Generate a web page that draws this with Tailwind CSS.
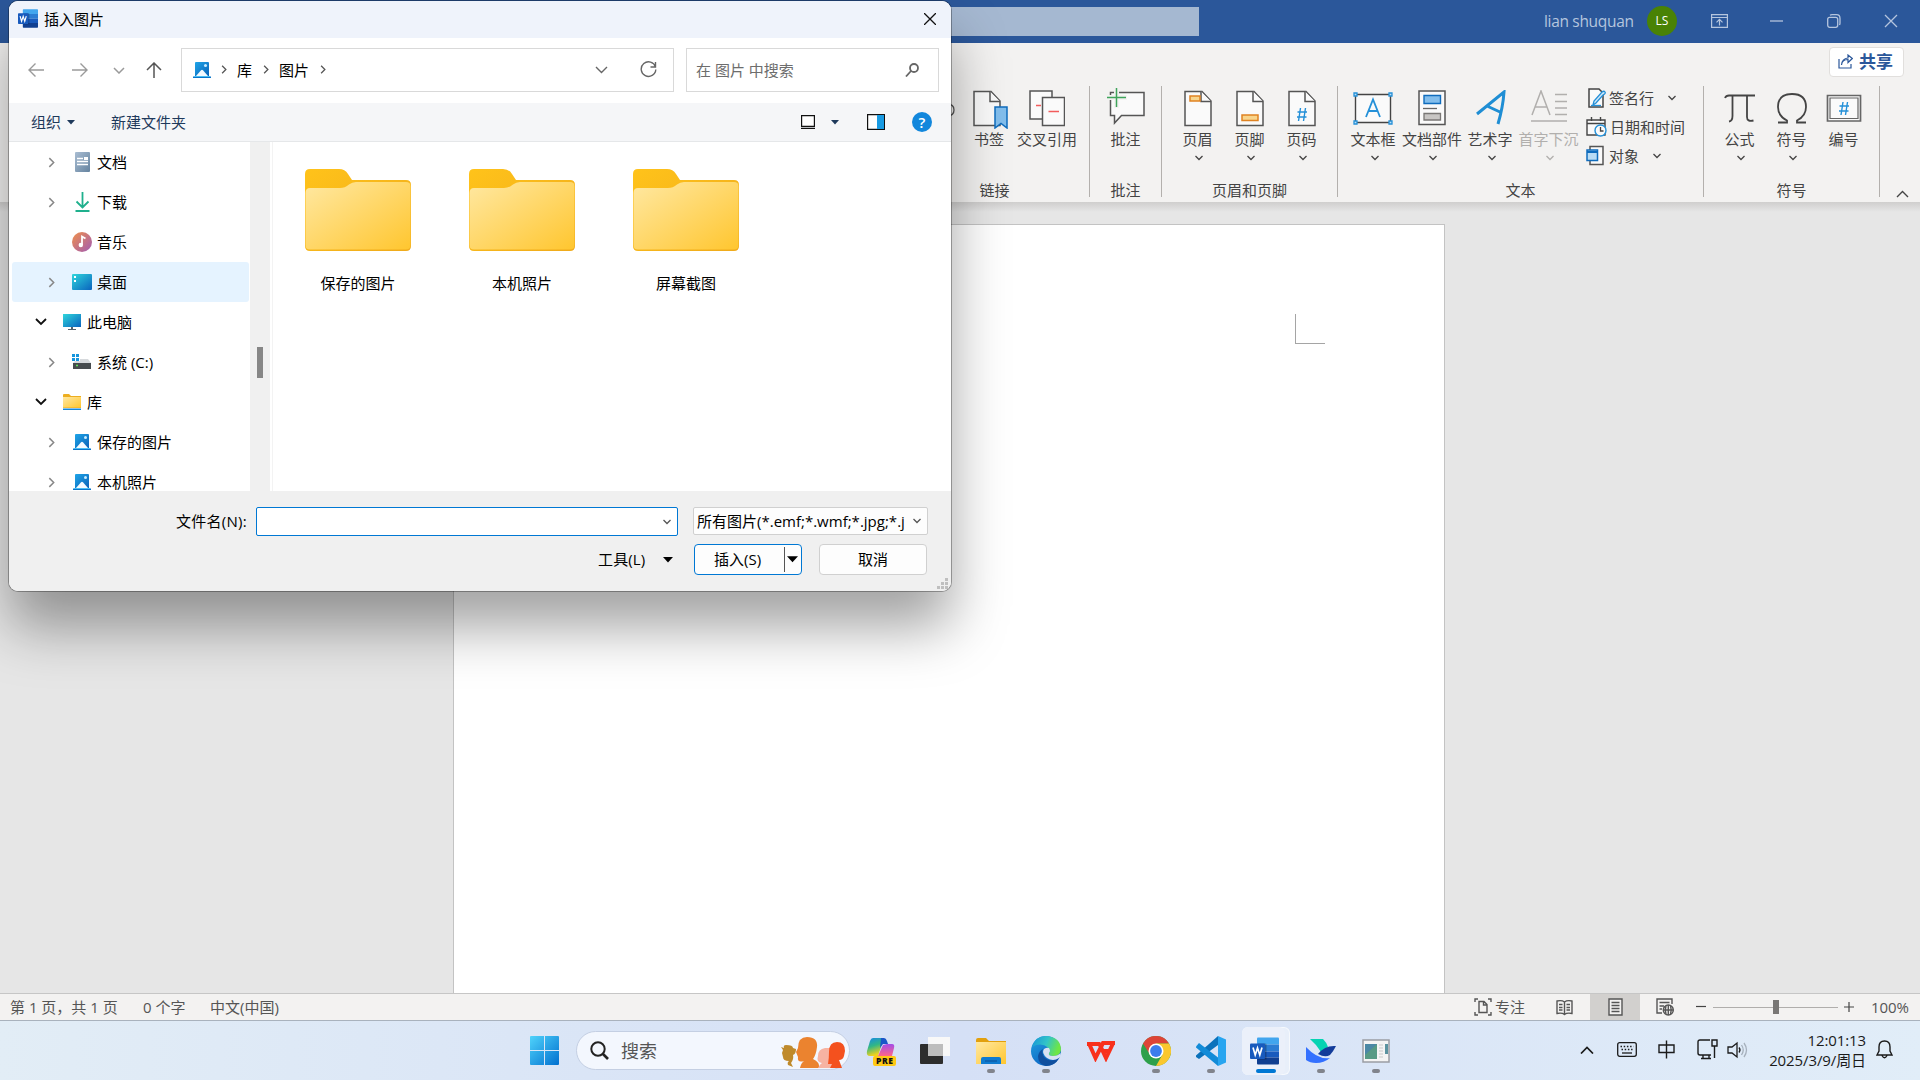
<!DOCTYPE html>
<html lang="zh-CN">
<head>
<meta charset="utf-8">
<title>Word</title>
<script src="https://cdn.jsdelivr.net/npm/@tailwindcss/browser@4"></script>
</head>
<body class="relative flex h-[1080px] w-[1920px] flex-col overflow-hidden whitespace-nowrap bg-[#e6e6e6] font-['Open_Sans','Noto_Sans_CJK_SC',sans-serif] text-[15px] leading-5 text-[#444]">

<svg class="absolute size-0">
  <defs>
    <linearGradient id="fold" x1="0" y1="0" x2="1" y2="1"><stop offset="0" stop-color="#ffe8a2"/><stop offset="1" stop-color="#ffc62f"/></linearGradient>
    <linearGradient id="foldback" x1="0" y1="0" x2="1" y2="1"><stop offset="0" stop-color="#ffc31a"/><stop offset="1" stop-color="#efaa1c"/></linearGradient>
    <linearGradient id="blue" x1="0" y1="0" x2="1" y2="1"><stop offset="0" stop-color="#1fa5e8"/><stop offset="1" stop-color="#0a62b8"/></linearGradient>
    <linearGradient id="teal" x1="0" y1="0" x2="1" y2="1"><stop offset="0" stop-color="#2fd6dc"/><stop offset="1" stop-color="#0a63be"/></linearGradient>
    <linearGradient id="music" x1="0" y1="0" x2="1" y2="1"><stop offset="0" stop-color="#f0904a"/><stop offset="1" stop-color="#a15bb5"/></linearGradient>
    <linearGradient id="docg" x1="0" y1="0" x2="1" y2="1"><stop offset="0" stop-color="#a9bdd2"/><stop offset="1" stop-color="#65839f"/></linearGradient>
    <linearGradient id="win" x1="0" y1="0" x2="1" y2="1"><stop offset="0" stop-color="#4fd3fb"/><stop offset="1" stop-color="#0270cf"/></linearGradient>
  </defs>
  <symbol id="chev" viewBox="0 0 10 6"><path d="M1.5 1 5 4.5 8.5 1" fill="none" stroke="currentColor" stroke-width="1.3"/></symbol>
  <symbol id="right" viewBox="0 0 8 12"><path d="M1.5 1 6.5 6 1.5 11" fill="none" stroke="currentColor" stroke-width="1.7"/></symbol>
  <symbol id="tri" viewBox="0 0 10 6"><path d="M0 0H10L5 5.5Z" fill="currentColor"/></symbol>
  <symbol id="folder" viewBox="0 0 106 83">
    <path d="M0 22V5Q0 0 5 0H34Q40 0 43 5L47 11H101Q106 11 106 16V77Q106 82 101 82H5Q0 82 0 77Z" fill="url(#foldback)"/>
    <path d="M0.500 24Q0.500 19 5 19H35Q40 19 44 15.500Q47 13 51 13H101Q105.500 13 105.500 17V76Q105.500 80.500 101 80.500H5Q0.500 80.500 0.500 76Z" fill="url(#fold)"/>
  </symbol>
  <symbol id="pic" viewBox="0 0 18 16">
    <path d="M2 1Q2 0 3 0H15Q16 0 16 1V14H2Z" fill="url(#blue)"/><path d="M3 14 8 8.300Q9 7.300 10 8.300L15 14Z" fill="#f3faff"/><circle cx="12.500" cy="3.500" r="1.500" fill="#c9ecff"/><path d="M0 14.500H18V16H0Z" fill="#0a74c9"/><path d="M1 14H17V15H1Z" fill="#49bff5"/>
  </symbol>
  <symbol id="word" viewBox="0 0 29 27">
    <path d="M7 1Q7 0 8 0H28Q29 0 29 1V7H7Z" fill="#41a5ee"/><path d="M7 7H29V14H7Z" fill="#2b7cd3"/><path d="M7 14H29V20H7Z" fill="#185abd"/><path d="M7 20H29V26Q29 27 28 27H8Q7 27 7 26Z" fill="#103f91"/>
    <path d="M8 6H15.500Q16.500 6 16.500 7V22H8Z" fill="#000" opacity=".25"/><rect y="6" width="15" height="15.500" rx="1" fill="#185abd"/>
    <path d="M3 10 5.200 17.500 7.500 10.500 9.800 17.500 12 10" fill="none" stroke="#fff" stroke-width="1.700"/>
  </symbol>
  <symbol id="page" viewBox="0 0 28 36"><path d="M1 1H18L27 10.500V35H1Z" fill="#fafafa" stroke="#555" stroke-width="1.500"/><path d="M17 1V11H27" fill="#fafafa" stroke="#555" stroke-width="1.500"/></symbol>
</svg>

<!-- Title bar -->
<header class="flex h-[43px] shrink-0 items-center bg-[#2b579a] pb-px text-[#b5c5de]">
  <div class="ml-[720px] h-[29px] w-[479px] bg-[#a5b8d1]"></div>
  <span class="ml-[345px] w-[90px] text-[15.5px] tracking-[-0.32px]">lian shuquan</span>
  <span class="ml-[13px] flex size-[30px] items-center justify-center rounded-full bg-[#498205] text-[12px] text-white">LS</span>
  <svg class="ml-[34px]" width="17" height="14" fill="none" stroke="currentColor" stroke-width="1.200"><path d="M.6.600H16.400V13.400H.6ZM.6 3.500H16.400M8.500 11.500V5.500M5.500 8.300 8.500 5.300 11.500 8.300"/></svg>
  <svg class="ml-[42px]" width="13" height="13" stroke="currentColor" stroke-width="1.300"><path d="M0 6H13"/></svg>
  <svg class="ml-[44px]" width="14" height="14" fill="none" stroke="currentColor" stroke-width="1.300"><rect x=".7" y="3.300" width="10" height="10" rx="2"/><path d="M3 1.200Q4 .700 5 .700H9.500Q13 .700 13 4.500V9Q13 10 12.500 11"/></svg>
  <svg class="ml-[43px]" width="14" height="14" stroke="currentColor" stroke-width="1.300"><path d="M1 1 13 13M13 1 1 13"/></svg>
</header>

<!-- Ribbon -->
<section class="flex h-[159px] shrink-0 flex-col bg-[#f3f2f1]">
  <div class="flex h-[43px] justify-end pr-4 pt-1">
    <button class="flex h-[30px] w-[75px] items-center gap-[6px] rounded border border-[#e1dfdd] bg-white pb-px pl-[8px] text-[17px] font-bold text-[#2b579a]">
      <svg width="15" height="15" fill="none" stroke="currentColor" stroke-width="1.200"><path d="M1 5V14H13V10M3.500 11Q4 5.500 10 5.500V8.500L14.300 4.500 10 1V4Q4 4.500 3.500 11Z"/></svg>共享
    </button>
  </div>
  <div class="flex h-[111px] pl-[900px]">
    <div class="flex w-[190px] flex-col justify-between border-r border-[#b3b0ad]">
      <div class="flex pl-[41px] pt-[4px]">
        <svg class="mt-[12px]" width="14" height="16" fill="none" stroke="#555" stroke-width="1.300"><path d="M6 2Q13 2 13 8T6 14"/></svg>
        <div class="ml-[4px] flex w-[60px] flex-col items-center">
          <svg class="ml-[3px]" width="36" height="39"><use href="#page" width="28" height="37"/><path d="M22 17H34V38L28 33.500 22 38Z" fill="#83beec" stroke="#0f6cbd" stroke-width="1.500"/></svg>
          <span>书签</span>
        </div>
        <div class="flex w-[56px] flex-col items-center">
          <svg width="36" height="37" fill="#fafafa" stroke="#555" stroke-width="1.500"><path d="M1 1H23V29H1Z"/><path d="M13.500 7.500H35.500V35.500H13.500Z"/><path d="M7 15.500H12M19.500 21.500H30" stroke="#f25c5c"/></svg>
          <span class="mt-[2px]">交叉引用</span>
        </div>
      </div>
      <span class="-mb-[3px] text-center">链接</span>
    </div>
    <div class="flex w-[72px] flex-col items-center justify-between border-r border-[#b3b0ad]">
      <div class="flex flex-col items-center pt-[2px]">
        <svg width="38" height="40" fill="#fafafa" stroke="#555" stroke-width="1.500"><path d="M3.500 4.500H37V27.500H14.500L7.500 35V27.500H3.500Z"/><path d="M9.500 0V20M0 9.500H20" stroke="#f3f2f1" stroke-width="5"/><path d="M9.500 0V19M0 9.500H19" stroke="#3fa45b"/></svg>
        <span class="mt-[1px]">批注</span>
      </div>
      <span class="-mb-[3px]">批注</span>
    </div>
    <div class="flex w-[176px] flex-col items-center justify-between border-r border-[#b3b0ad]">
      <div class="flex pt-[4px]">
        <div class="flex w-[52px] flex-col items-center"><svg width="28" height="37"><use href="#page" width="28" height="37"/><path d="M6 6H16V11H6Z" fill="#f8d58c" stroke="#e08322" stroke-width="1.500"/></svg><span class="mt-[2px]">页眉</span><svg class="ml-[2px] mt-[6px]" width="10" height="6"><use href="#chev"/></svg></div>
        <div class="flex w-[52px] flex-col items-center"><svg width="28" height="37"><use href="#page" width="28" height="37"/><path d="M6 25H22V30.500H6Z" fill="#f8d58c" stroke="#e08322" stroke-width="1.500"/></svg><span class="mt-[2px]">页脚</span><svg class="ml-[2px] mt-[6px]" width="10" height="6"><use href="#chev"/></svg></div>
        <div class="flex w-[52px] flex-col items-center"><svg width="28" height="37"><use href="#page" width="28" height="37"/><path d="M12.500 18 10.500 31M17.500 18 15.500 31M9.500 22H19M9 27H18.500" stroke="#2490d8" stroke-width="1.400"/></svg><span class="mt-[2px]">页码</span><svg class="ml-[2px] mt-[6px]" width="10" height="6"><use href="#chev"/></svg></div>
      </div>
      <span class="-mb-[3px]">页眉和页脚</span>
    </div>
    <div class="flex w-[366px] flex-col items-center justify-between border-r border-[#b3b0ad]">
      <div class="flex h-[92px] w-full pl-[6px]">
        <div class="flex w-[58px] flex-col items-center pt-[4px]"><svg width="40" height="37"><path d="M2.500 4.500H37.500V32.500H2.500Z" fill="#fafafa" stroke="#444" stroke-width="1.400"/><path d="M1 3H4V6H1ZM36 3H39V6H36ZM1 31H4V34H1ZM36 31H39V34H36Z" fill="#bfe0f7" stroke="#2490d8" stroke-width="1.300"/><path d="M13 27 20 9.500 27 27M15.500 21H24.500" fill="none" stroke="#2490d8" stroke-width="1.800"/></svg><span class="mt-[2px]">文本框</span><svg class="ml-[3px] mt-[6px]" width="10" height="6"><use href="#chev"/></svg></div>
        <div class="flex w-[60px] flex-col items-center pt-[4px]"><svg width="28" height="37"><path d="M1 1H27V34.500H1Z" fill="#fafafa" stroke="#555" stroke-width="1.500"/><path d="M6 5.500H22.500V13.500H6Z" fill="#83beec" stroke="#0f6cbd" stroke-width="1.400"/><path d="M5 18.500H19" stroke="#666" stroke-width="1.300"/><path d="M6 23.500H22.500V30H6Z" fill="#c8c6c4" stroke="#797775" stroke-width="1.300"/></svg><span class="mt-[2px]">文档部件</span><svg class="ml-[2px] mt-[6px]" width="10" height="6"><use href="#chev"/></svg></div>
        <div class="flex w-[56px] flex-col items-center pt-[4px]"><svg class="ml-[2px]" width="32" height="37" fill="none" stroke="#1f8ed4" stroke-width="3"><path d="M2 24 29 2Q28 17 23 34M12 16 25 22"/></svg><span class="mt-[2px]">艺术字</span><svg class="ml-[3px] mt-[6px]" width="10" height="6"><use href="#chev"/></svg></div>
        <div class="flex w-[61px] flex-col items-center pt-[4px] text-[#b1afad]"><svg width="38" height="37" fill="none" stroke="currentColor" stroke-width="1.500"><path d="M2 25 11 1 20 25M5.500 17H16.500M25 4.500H37M25 11.500H37M25 18H37M25 24.500H37M1 31H37"/></svg><span class="mt-[2px]">首字下沉</span><svg class="ml-[2px] mt-[6px]" width="10" height="6"><use href="#chev"/></svg></div>
        <div class="-mt-[3px] flex flex-col pl-[7px]">
          <div class="flex h-[29px] items-center"><svg width="20" height="22" class="mr-[3px]"><path d="M3 2H13L17 6V20H3Z" fill="#fafafa" stroke="#444" stroke-width="1.500"/><path d="M7 18 8 14 16 5Q18 3.500 19 5T17 8L10 16Z" fill="#cfe7f8" stroke="#2490d8" stroke-width="1.300"/><path d="M5 18.500H15" stroke="#2490d8" stroke-width="1.300"/></svg>签名行<svg class="ml-[13px]" width="10" height="6"><use href="#chev"/></svg></div>
          <div class="flex h-[29px] items-center"><svg width="21" height="21" class="mr-[3px]" fill="none"><path d="M1 4H19V19H1Z" fill="#fafafa" stroke="#444" stroke-width="1.400"/><path d="M1 7.500H19M5.500 1V5M14.500 1V5" stroke="#444" stroke-width="1.400"/><circle cx="14.500" cy="14.500" r="5.500" fill="#fafafa" stroke="#2490d8" stroke-width="1.400"/><path d="M14.500 11V15H17.500" stroke="#444" stroke-width="1.300"/></svg>日期和时间</div>
          <div class="flex h-[29px] items-center"><svg width="20" height="21" class="mr-[3px]"><path d="M4 1.500H17V19.500H4Z" fill="#fafafa" stroke="#555" stroke-width="1.500"/><path d="M1 5H11.500V15.500H1Z" fill="#b9dcf5" stroke="#0f6cbd" stroke-width="1.500"/><path d="M1 7H11.500" stroke="#0f6cbd" stroke-width="2"/></svg>对象<svg class="ml-[13px]" width="10" height="6"><use href="#chev"/></svg></div>
        </div>
      </div>
      <span class="-mb-[3px]">文本</span>
    </div>
    <div class="flex w-[176px] flex-col items-center justify-between border-r border-[#b3b0ad]">
      <div class="flex pt-[4px]">
        <div class="flex w-[52px] flex-col items-center"><svg width="32" height="37" fill="none" stroke="#444" stroke-width="1.800"><path d="M1 8Q2 5.500 5 5.500H31M8.500 6V26Q8.500 31 5 31.500M23 6V27Q23 32 29.500 30.500"/></svg><span class="mt-[2px]">公式</span><svg class="ml-[3px] mt-[6px]" width="10" height="6"><use href="#chev"/></svg></div>
        <div class="flex w-[52px] flex-col items-center"><svg width="32" height="37" fill="none" stroke="#444" stroke-width="1.800"><path d="M2 32.500H11V30.500Q2 26 2 17Q2 4 16 4T30 17Q30 26 21 30.500V32.500H30"/></svg><span class="mt-[2px]">符号</span><svg class="ml-[3px] mt-[6px]" width="10" height="6"><use href="#chev"/></svg></div>
        <div class="flex w-[52px] flex-col items-center"><svg width="36" height="37" fill="#fafafa" stroke="#666"><path d="M1.500 5.500H34.500V31H1.500Z" stroke-width="1.700"/><path d="M4 8H32V28.500H4Z" stroke-width="1.200"/><path d="M17 12 15 25M21.500 12 19.500 25M13.500 16H23M13 21H22.500" stroke="#2490d8" stroke-width="1.400"/></svg><span class="mt-[2px]">编号</span></div>
      </div>
      <span class="-mb-[3px]">符号</span>
    </div>
    <svg class="ml-[16px] mt-[104px]" width="13" height="8" fill="none" stroke="#444" stroke-width="1.400"><path d="M1 7 6.500 1.500 12 7"/></svg>
  </div>
</section>

<!-- Document area -->
<main class="flex min-h-0 grow flex-col overflow-hidden">
  <div class="h-[10px] shrink-0 bg-linear-to-b from-[#cfcecd] to-[#e6e6e6]"></div>
  <div class="ml-[453px] mt-[12px] flex w-[992px] grow items-start justify-end border border-b-0 border-[#c3c3c3] bg-white pr-[119px] pt-[89px]">
    <div class="h-[30px] w-[30px] border-b border-l border-[#a5a5a5]"></div>
  </div>
</main>

<!-- Status bar -->
<footer class="flex h-[28px] shrink-0 items-center border-y border-t-[#c6c6c6] border-b-[#a9b2bd] bg-[#f3f2f1] pl-[10px] text-[#555]">
  <span class="w-[133px]">第 1 页，共 1 页</span><span class="w-[67px]">0 个字</span><span>中文(中国)</span>
  <div class="ml-auto flex h-full items-center">
    <svg width="18" height="18" fill="none" stroke="#555" stroke-width="1.400"><path d="M4 1H1V4M14 1H17V4M4 17H1V14M14 17H17V14M5 3.500H10L13 6.500V14.500H5ZM9.500 3.500V7H13"/></svg>
    <span class="ml-[3px] w-[61px]">专注</span>
    <svg width="17" height="17" fill="none" stroke="#555" stroke-width="1.400"><path d="M1 2Q6 1 8.500 3Q11 1 16 2V14.500Q11 13.500 8.500 15.500Q6 13.500 1 14.500ZM8.500 3V15M3 5.500H6.500M3 8.500H6.500M3 11H6.500M10.500 5.500H14M10.500 8.500H14M10.500 11H14"/></svg>
    <div class="ml-[17px] flex h-[26px] w-[50px] items-center justify-center bg-[#d2d0ce]"><svg width="15" height="18" fill="#f3f2f1" stroke="#555" stroke-width="1.400"><path d="M1 1H14V17H1ZM3.500 4.500H11.500M3.500 7.500H11.500M3.500 10.500H11.500M3.500 13.500H11.500"/></svg></div>
    <svg class="ml-[16px]" width="18" height="18" fill="none" stroke="#555" stroke-width="1.400"><path d="M6 15H1V1H16V6M3.500 4.500H13.500M3.500 8H8M3.500 11H6"/><circle cx="12.300" cy="12" r="5"/><path d="M7.500 12H17.300M12.300 7V17M10 8Q8.500 12 10 16M14.500 8Q16 12 14.500 16"/></svg>
    <svg class="ml-[22px]" width="10" height="10" stroke="#444" stroke-width="1.200"><path d="M0 4.500H10"/></svg>
    <div class="ml-[7px] flex w-[125px] items-center"><div class="h-px w-[60px] bg-[#b0aeac]"></div><div class="h-[14px] w-[6px] bg-[#797775]"></div><div class="h-px grow bg-[#b0aeac]"></div></div>
    <svg class="ml-[6px]" width="10" height="10" stroke="#444" stroke-width="1.200"><path d="M0 5H10M5 0V10"/></svg>
    <span class="ml-[17px] w-[49px] tracking-[-0.1px]">100%</span>
  </div>
</footer>

<!-- Taskbar -->
<nav class="flex h-[59px] shrink-0 items-center bg-linear-to-r from-[#e2edf6] via-[#d5e0f6] to-[#e1edf8] text-[#1b1b1b]">
  <svg class="ml-[530px]" width="29" height="29" fill="url(#win)"><path d="M1 0H14V14H0V1Q0 0 1 0ZM15 0H28Q29 0 29 1V14H15ZM0 15H14V29H1Q0 29 0 28ZM15 15H29V28Q29 29 28 29H15Z"/></svg>
  <div class="ml-[17px] flex h-[39px] w-[274px] items-center rounded-full border border-[#c4cfe3] bg-[#f3f7fe] pl-[13px]">
    <svg width="19" height="19" fill="none" stroke="#222" stroke-width="2"><circle cx="8" cy="8" r="6.700"/><path d="M13 13 18 18" stroke-width="2.600"/></svg>
    <span class="ml-[12px] text-[18px] text-[#555]">搜索</span>
    <svg class="ml-auto mr-[4px] mt-[3px]" width="65" height="32">
      <path d="M4 12Q3 9 6 9Q13 9 13 12L16 13Q16 18 13 19Q14 23 11 27L13 31 8 29Q7 26 9 25Q3 25 3 21L2 17 3 14 1 11Z" fill="#bf8a2c"/>
      <path d="M20 32Q21 27 24 25Q17 27 18 21L16 16 18 12Q18 1 27 1Q38 1 37 11Q36 19 33 23Q40 26 39 32Z" fill="#eb832f"/>
      <path d="M38 32Q40 28 42 27Q36 26 38 20Q38 13 45 12H52V28L54 32Z" fill="#f7b3a2"/>
      <path d="M48 28Q49 22 49 16Q49 6 57 6Q65 6 65 15L64 20Q63 24 59 24L62 32H50L52 28Z" fill="#f4511e"/>
    </svg>
  </div>
  <div class="ml-[3px] flex h-full">
    <div class="flex w-[55px] items-center justify-center"><svg width="30" height="30">
      <defs><linearGradient id="cp" x2="0.300" y2="1"><stop stop-color="#1788e8"/><stop offset=".5" stop-color="#31b785"/><stop offset="1" stop-color="#f3d21b"/></linearGradient><linearGradient id="cp2" x2="0" y2="1"><stop stop-color="#a44ce8"/><stop offset="1" stop-color="#ff6688"/></linearGradient></defs>
      <path d="M7 2H18L12 20H4Q0 20 1 15L4 5Q5 2 7 2Z" fill="url(#cp)"/><path d="M15 2H18Q20 2 21 5L22 8H17L14 12Z" fill="#1a56c8"/><path d="M21 8H26Q29 8 28 12L26 20H12L17 9Z" fill="url(#cp2)"/><rect x="7" y="20" width="23" height="10" rx="2" fill="#ffc915"/><text x="10" y="28.200" font-size="8.500" font-weight="800" fill="#111" textLength="17">PRE</text></svg></div>
    <div class="flex w-[55px] items-center justify-center"><svg width="31" height="30"><rect y="8" width="23" height="20" rx="1" fill="#2d2d2d"/><path d="M8 1H30V20H8Z" fill="#f8f8f8"/><path d="M8 8H23V20H8Z" fill="#bdbdbd"/></svg></div>
    <div class="relative flex w-[55px] items-center justify-center"><svg width="30" height="28"><path d="M0 3Q0 1 2 1H10L13 4H30V15H0Z" fill="#e2a00d"/><path d="M0 5H30V27H0Z" fill="url(#fold)"/><path d="M5 27V22Q5 20 7 20H23Q25 20 25 22V27Z" fill="#0f7bd0"/><path d="M9 24H21" stroke="#0a4f96"/></svg><i class="absolute bottom-[7px] h-1 w-2 rounded-full bg-[#81848c]"></i></div>
    <div class="relative flex w-[55px] items-center justify-center"><svg width="30" height="30">
      <defs><linearGradient id="e1" x2="1" y2=".3"><stop stop-color="#1793d8"/><stop offset=".55" stop-color="#32c4c8"/><stop offset="1" stop-color="#6ee645"/></linearGradient><linearGradient id="e2" x2=".6" y2="1"><stop stop-color="#24a3de"/><stop offset="1" stop-color="#0b62c4"/></linearGradient></defs>
      <circle cx="15" cy="15" r="15" fill="url(#e2)"/><path d="M1 11Q4 0 15 0Q30 1 30 14Q29 20 22 20Q17 20 18 17Q20 15 17 11.500Q10 6 1 11Z" fill="url(#e1)"/><path d="M12 13Q10 17 14 22Q20 27 28 22Q24 30 15 30Q7 28 7 20Q8 15 12 13Z" fill="#104f9e"/><path d="M18 12Q20 15 18 17Q17 20 22 20Q27 20 29.500 17L30 20 28 22Q22 26 16 22Q10 17 13 13Q16 11 18 12Z" fill="#d8e1f3"/></svg><i class="absolute bottom-[7px] h-1 w-2 rounded-full bg-[#81848c]"></i></div>
    <div class="flex w-[55px] items-center justify-center"><svg width="30" height="22" fill="none" stroke="#f8301c" stroke-width="4"><path d="M1 4H14M3 3.500 9.500 18 17 3H29M13 3 20 18 27 3.500M18 11H23"/></svg></div>
    <div class="relative flex w-[55px] items-center justify-center"><svg width="30" height="30"><circle cx="15" cy="15" r="15" fill="#2da04b"/><path d="M2 7.500A15 15 0 0 1 28 7.500H15L9 18.500Z" fill="#dd4437"/><path d="M15 7.500H28A15 15 0 0 1 15 30L21.500 18.500Z" fill="#fbc72e"/><circle cx="15" cy="15" r="7.500" fill="#fff"/><circle cx="15" cy="15" r="5.900" fill="#3b7ded"/></svg><i class="absolute bottom-[7px] h-1 w-2 rounded-full bg-[#81848c]"></i></div>
    <div class="relative flex w-[55px] items-center justify-center"><svg width="30" height="30"><path d="M22 0 30 3.500V26.500L22 30Z" fill="#28a5f0"/><path d="M0 19.500 22 0V9L3 23 0 21Z" fill="#0a71bb"/><path d="M0 10.500 3 7 22 21.500V30L0 11.500Z" fill="#128bd8"/></svg><i class="absolute bottom-[7px] h-1 w-2 rounded-full bg-[#81848c]"></i></div>
    <div class="relative flex w-[55px] items-center justify-center"><div class="absolute left-[4px] top-[6px] h-[48px] w-[48px] rounded-md border border-white/60 bg-white/40"></div><div class="absolute left-[4px] top-[6px] h-[48px] w-[43px] rounded-md bg-[#ebf0fa]"></div><svg class="relative -left-[1px]" width="29" height="28"><use href="#word"/></svg><i class="absolute bottom-[7px] left-[18px] h-1 w-5 rounded-full bg-[#0078d4]"></i></div>
    <div class="relative flex w-[55px] items-center justify-center"><svg width="30" height="26"><path d="M4 1H17Q21 5 22 9L15 14Q10 6 4 1Z" fill="#05d3b2"/><path d="M0 9Q12 22 24 20Q18 25 10 25Q4 25 0 22Z" fill="#3370ff"/><path d="M12 16Q19 7 30 8Q27 14 24 17Q19 20 12 16Z" fill="#133c9a"/></svg><i class="absolute bottom-[7px] h-1 w-2 rounded-full bg-[#81848c]"></i></div>
    <div class="relative flex w-[55px] items-center justify-center"><svg width="28" height="24"><path d="M1 1H27V23H1Z" fill="#f4f4f4" stroke="#9a9da4" stroke-width="1.500"/><path d="M3 5H15V20H3Z" fill="#579a84"/><path d="M3 5H15L3 16Z" fill="#4b88a5"/><path d="M17 6H21M17 9H21M17 12H21M17 15H21M17 18H21" stroke="#c9c9c9"/><path d="M23 5H26V15H23Z" fill="#5b93a0"/></svg><i class="absolute bottom-[7px] h-1 w-2 rounded-full bg-[#81848c]"></i></div>
  </div>
  <div class="ml-auto flex items-center pb-[2px]">
    <svg width="14" height="8" fill="none" stroke="#1b1b1b" stroke-width="1.700"><path d="M1 7.500 7 1.500 13 7.500"/></svg>
    <svg class="ml-[23px]" width="20" height="15" fill="none" stroke="#1b1b1b" stroke-width="1.300"><rect x=".7" y=".7" width="18.600" height="13.600" rx="2"/><path d="M3.500 4.500H16.500M4.500 7.500H15.500" stroke-dasharray="1.500 1.700"/><path d="M5 11H15"/></svg>
    <svg class="ml-[21px]" width="17" height="19" fill="none" stroke="#1b1b1b" stroke-width="1.400"><path d="M1 5H16V12.500H1ZM8.500 .500V18.500"/></svg>
    <svg class="ml-[22px]" width="21" height="21" fill="none" stroke="#1b1b1b" stroke-width="1.400"><path d="M13 1H3Q1 1 1 3V14Q1 16 3 16H14M6 16V19.500M12 16V19.500M4 19.500H14M15 1H20V7H15ZM17.500 7V19"/></svg>
    <svg class="ml-[9px]" width="21" height="18" fill="none" stroke="#1b1b1b" stroke-width="1.300"><path d="M1 6H5L10 2V16L5 12H1ZM12 6.500Q14 9 12 11.500"/><path d="M14.500 4Q18 9 14.500 14M17 2Q22 9 17 16" stroke="#a6b0bc"/></svg>
    <div class="ml-[20px] flex w-[98px] flex-col items-end text-[15px] leading-[20px] tracking-[-0.1px]"><span>12:01:13</span><span>2025/3/9/周日</span></div>
    <svg class="ml-[10px] mr-[27px]" width="17" height="19" fill="none" stroke="#1b1b1b" stroke-width="1.400"><path d="M1 15H16L14 11V7Q14 1 8.500 1T3 7V11ZM6 15.500Q8.500 20 11 15.500"/></svg>
  </div>
</nav>

<!-- Insert picture dialog -->
<div class="absolute left-[9px] top-px flex h-[590px] w-[942px] flex-col overflow-hidden rounded-[9px] bg-white text-black shadow-[0_0_0_1px_rgba(0,0,0,0.3),0_36px_56px_rgba(0,0,0,0.37)]">
  <div class="flex h-[37px] shrink-0 items-center bg-[#eff3fb] pb-[2px] pl-[9px] pr-[15px]">
    <svg width="20" height="19"><use href="#word"/></svg>
    <span class="ml-[6px]">插入图片</span>
    <svg class="ml-auto" width="12" height="12" stroke="#111" stroke-width="1.300"><path d="M0 0 12 12M12 0 0 12"/></svg>
  </div>
  <div class="flex h-[65px] shrink-0 items-center pb-px pl-[19px] text-[#9a9a9a]">
    <svg width="16" height="14" fill="none" stroke="currentColor" stroke-width="1.400"><path d="M16 7H1M7.500 .500 1 7 7.500 13.500"/></svg>
    <svg class="ml-[28px]" width="16" height="14" fill="none" stroke="currentColor" stroke-width="1.400"><path d="M0 7H15M8.500 .500 15 7 8.500 13.500"/></svg>
    <svg class="ml-[25px]" width="12" height="7" fill="none" stroke="currentColor" stroke-width="1.500"><path d="M1 1 6 6 11 1"/></svg>
    <svg class="ml-[21px]" width="16" height="16" fill="none" stroke="#555" stroke-width="1.500"><path d="M8 16V1M1 8 8 1 15 8"/></svg>
    <div class="ml-[19px] flex h-[44px] w-[493px] items-center border border-[#d9d9d9] pb-px pl-[11px] text-black">
      <svg width="18" height="16"><use href="#pic"/></svg>
      <svg class="ml-[10px] text-[#555]" width="6" height="9"><use href="#right"/></svg>
      <span class="ml-[10px]">库</span>
      <svg class="ml-[11px] text-[#555]" width="6" height="9"><use href="#right"/></svg>
      <span class="ml-[10px]">图片</span>
      <svg class="ml-[11px] text-[#555]" width="6" height="9"><use href="#right"/></svg>
      <svg class="ml-auto" width="13" height="8" fill="none" stroke="#666" stroke-width="1.400"><path d="M1 1 6.500 6.500 12 1"/></svg>
      <svg class="ml-[32px] mr-[16px]" width="17" height="17" fill="none" stroke="#666" stroke-width="1.400"><path d="M15.500 6A7.300 7.300 0 1 0 15.800 8.500M15.500 1V6H10.500"/></svg>
    </div>
    <div class="ml-[12px] flex h-[44px] w-[253px] items-center justify-between border border-[#d9d9d9] pl-[9px] pr-[19px] text-[#6d6d6d]"><span>在 图片 中搜索</span><svg width="14" height="14" fill="none" stroke="#666" stroke-width="1.800"><circle cx="9" cy="5" r="4"/><path d="M6 8 1 13.500"/></svg></div>
  </div>
  <div class="flex h-[39px] shrink-0 items-center border-b border-[#e5e7e9] bg-[#f5f6f8] pl-[22px] pr-[19px] text-[#1e395b]">
    <span>组织</span><svg class="ml-[6px]" width="8" height="5"><use href="#tri"/></svg><span class="ml-[36px]">新建文件夹</span>
    <svg class="ml-auto" width="14" height="14" fill="#fff" stroke="#111" stroke-width="1.200"><path d="M.6.600H13.400V11.400H.6ZM0 13.400H14"/></svg>
    <svg class="ml-[16px]" width="8" height="5"><use href="#tri"/></svg>
    <svg class="ml-[28px]" width="18" height="16"><path d="M.6.600H17.400V15.400H.6Z" fill="#fff" stroke="#111" stroke-width="1.200"/><path d="M10 1H17V15H10Z" fill="#199be3"/></svg>
    <span class="ml-[27px] flex size-[20px] items-center justify-center rounded-full bg-[#1287dc] text-[15px] font-semibold text-white">?</span>
  </div>
  <div class="flex h-[349px] shrink-0 overflow-hidden">
    <div class="flex w-[241px] flex-col pl-[3px] *:shrink-0">
      <div class="flex h-10 w-[237px] items-center pl-[36px]"><svg class="text-[#888]" width="7" height="11"><use href="#right"/></svg><svg class="ml-[20px] mr-[7px]" width="15" height="20"><rect width="15" height="20" rx="1" fill="url(#docg)"/><path d="M2 6.500H8M2 9.500H13M2 12.500H13" stroke="#fff" stroke-width="1.300"/><path d="M9 5H13V8H9Z" fill="#fff"/></svg>文档</div>
      <div class="flex h-10 w-[237px] items-center pl-[36px]"><svg class="text-[#888]" width="7" height="11"><use href="#right"/></svg><svg class="ml-[20px] mr-[7px]" width="15" height="20" fill="none" stroke="#1fb08d" stroke-width="1.800"><path d="M7.500 0V15M1.500 9.500 7.500 15.500 13.500 9.500M.5 19H14.500"/></svg>下载</div>
      <div class="flex h-10 w-[237px] items-center pl-[60px]"><svg class="mr-[5px]" width="20" height="20"><circle cx="10" cy="10" r="10" fill="url(#music)"/><circle cx="8.800" cy="13" r="2.200" fill="#fff"/><path d="M10 13V4.500L13.500 6.500" fill="none" stroke="#fff" stroke-width="1.800"/></svg>音乐</div>
      <div class="flex h-10 w-[237px] items-center rounded-[3px] bg-[#e5f3ff] pl-[36px]"><svg class="text-[#888]" width="7" height="11"><use href="#right"/></svg><svg class="ml-[17px] mr-[5px]" width="20" height="16"><rect width="20" height="16" rx="1" fill="url(#teal)"/><path d="M2 2H4V4H2ZM2 6H4V8H2Z" fill="#fff"/></svg>桌面</div>
      <div class="flex h-10 w-[237px] items-center pl-[23px]"><svg width="12" height="8" fill="none" stroke="#111" stroke-width="1.800"><path d="M1 1 6 6 11 1"/></svg><svg class="ml-[16px] mr-[6px]" width="18" height="16"><rect width="18" height="13" fill="url(#teal)"/><path d="M8 13H10V15H13V16H5V15H8Z" fill="#56616b"/></svg>此电脑</div>
      <div class="flex h-10 w-[237px] items-center pl-[36px]"><svg class="text-[#888]" width="7" height="11"><use href="#right"/></svg><svg class="ml-[17px] mr-[6px]" width="19" height="20"><path d="M0 2H3V5H0ZM4 2H7V5H4ZM0 6H3V9H0ZM4 6H7V9H4Z" fill="#1595dd"/><path d="M8 7H16L19 11H1L3 9H8Z" fill="#d6d9dc"/><path d="M1 11H19V17H1Z" fill="#464b4e"/><path d="M4 13.500H6" stroke="#61e057" stroke-width="1.500"/></svg>系统 (C:)</div>
      <div class="flex h-10 w-[237px] items-center pl-[23px]"><svg width="12" height="8" fill="none" stroke="#111" stroke-width="1.800"><path d="M1 1 6 6 11 1"/></svg><svg class="ml-[16px] mr-[6px]" width="18" height="16"><path d="M0 1Q0 0 1 0H6L8 2H18V14H0Z" fill="#edae20"/><path d="M0 3H18V13.500H0Z" fill="url(#fold)"/><path d="M0 14.500H18V16H0Z" fill="#1686d9"/></svg>库</div>
      <div class="flex h-10 w-[237px] items-center pl-[36px]"><svg class="text-[#888]" width="7" height="11"><use href="#right"/></svg><svg class="ml-[18px] mr-[6px]" width="18" height="16"><use href="#pic"/></svg>保存的图片</div>
      <div class="flex h-10 w-[237px] items-center pl-[36px]"><svg class="text-[#888]" width="7" height="11"><use href="#right"/></svg><svg class="ml-[18px] mr-[6px]" width="18" height="16"><use href="#pic"/></svg>本机照片</div>
    </div>
    <div class="flex w-5 justify-center bg-[#f0f0f0] pt-[205px]"><div class="h-[31px] w-[6px] bg-[#868686]"></div></div>
    <div class="ml-[2px] flex grow border-l border-[#f3f3f3] pl-[3px] pt-[27px]">
      <div class="flex w-[164px] flex-col items-center"><svg width="106" height="83"><use href="#folder"/></svg><span class="mt-[21px]">保存的图片</span></div>
      <div class="flex w-[164px] flex-col items-center"><svg width="106" height="83"><use href="#folder"/></svg><span class="mt-[21px]">本机照片</span></div>
      <div class="flex w-[164px] flex-col items-center"><svg width="106" height="83"><use href="#folder"/></svg><span class="mt-[21px]">屏幕截图</span></div>
    </div>
  </div>
  <div class="flex grow flex-col bg-[#f0f0f0]">
    <div class="mt-[16px] flex h-[29px] items-center">
      <span class="-mt-[2px] ml-[167px] w-[80px] tracking-[0.25px]">文件名(N):</span>
      <div class="flex h-[29px] w-[422px] items-center justify-end rounded-[2px] border border-[#0078d4] bg-white pr-[5px]"><svg width="10" height="6" class="text-[#555]"><use href="#chev"/></svg></div>
      <div class="-mt-px ml-[15px] flex h-[28px] w-[235px] items-center justify-between rounded-[2px] border border-[#d0d0d0] bg-[#fdfdfd] pl-[3px] pr-[5px]"><span>所有图片(*.emf;*.wmf;*.jpg;*.j</span><svg width="10" height="6" class="text-[#555]"><use href="#chev"/></svg></div>
    </div>
    <div class="mt-[8px] flex h-[31px] items-center pl-[589px]">
      <span class="-mt-[2px] w-[65px] tracking-[0.15px]">工具(L)</span>
      <svg width="10" height="6"><use href="#tri"/></svg>
      <div class="ml-[21px] flex h-[31px] w-[108px] items-center rounded-[4px] border border-[#0078d4] bg-[#fdfdfd] pl-[19px]"><span class="-mt-[2px] w-[70px]">插入(S)</span><i class="h-[25px] w-px bg-[#555]"></i><svg class="ml-[2px]" width="11" height="7"><use href="#tri"/></svg></div>
      <div class="ml-[17px] flex h-[31px] w-[108px] items-center justify-center rounded-[4px] border border-[#d0d0d0] bg-[#fdfdfd] pb-[2px]">取消</div>
    </div>
    <svg class="ml-auto mr-[3px] mt-[3px]" width="11" height="11" fill="#bfbfbf"><path d="M8 0H11V3H8ZM8 4H11V7H8ZM4 4H7V7H4ZM8 8H11V11H8ZM4 8H7V11H4ZM0 8H3V11H0Z"/></svg>
  </div>
</div>
</body>
</html>
